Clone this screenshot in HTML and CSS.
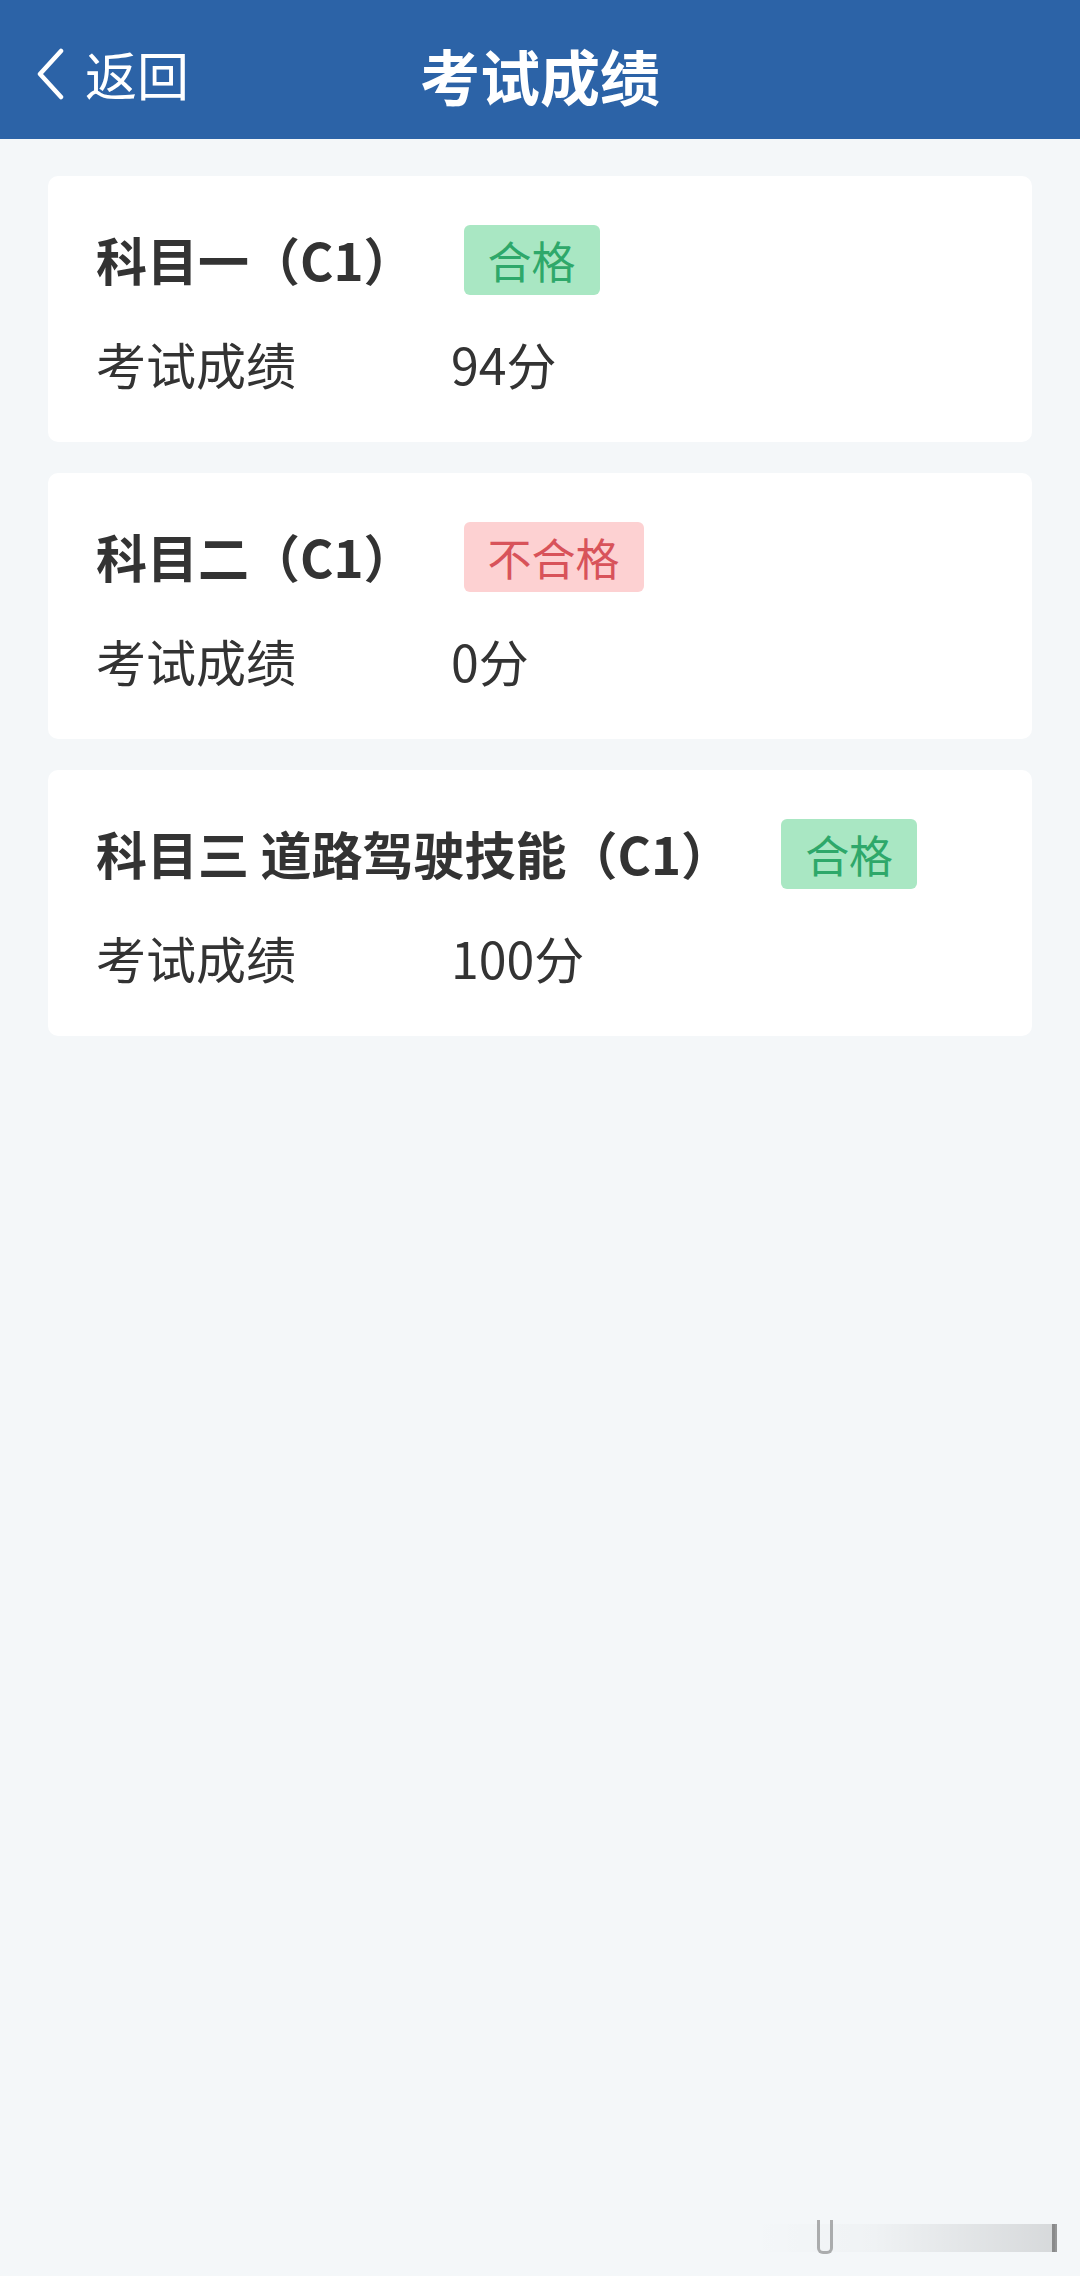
FILE: index.html
```html
<!DOCTYPE html>
<html lang="zh-CN">
<head>
<meta charset="utf-8">
<title>考试成绩</title>
<link rel="stylesheet" href="styles.css">
</head>
<body>
<header class="topbar">
  <div class="back">
    <svg class="chev" viewBox="0 0 30 52" width="30" height="52"><path d="M26 3 L5 26 L26 49" fill="none" stroke="#fff" stroke-width="4.5" stroke-linecap="round" stroke-linejoin="round"/></svg>
    <span class="back-text">返回</span>
  </div>
  <h1 class="title">考试成绩</h1>
</header>
<main class="list">
  <section class="card">
    <div class="row-title">
      <span class="subject">科目一（C1）</span>
      <span class="badge pass">合格</span>
    </div>
    <div class="row-score">
      <span class="label">考试成绩</span>
      <span class="value">94分</span>
    </div>
  </section>
  <section class="card">
    <div class="row-title">
      <span class="subject">科目二（C1）</span>
      <span class="badge fail">不合格</span>
    </div>
    <div class="row-score">
      <span class="label">考试成绩</span>
      <span class="value">0分</span>
    </div>
  </section>
  <section class="card">
    <div class="row-title">
      <span class="subject">科目三 道路驾驶技能（C1）</span>
      <span class="badge pass">合格</span>
    </div>
    <div class="row-score">
      <span class="label">考试成绩</span>
      <span class="value">100分</span>
    </div>
  </section>
</main>
<div class="mark"><span class="m1"></span><span class="m3"></span></div>
</body>
</html>
```
FILE: styles.css
```css
* { box-sizing: border-box; }
html, body { margin: 0; padding: 0; }
body {
  width: 1080px;
  height: 2276px;
  background: #f4f7f9;
  font-family: "Noto Sans CJK SC", "Noto Sans", sans-serif;
  color: #333;
  position: relative;
  overflow: hidden;
}
.topbar {
  height: 139px;
  background: #2c63a7;
  position: relative;
  display: flex;
  align-items: center;
  justify-content: center;
  padding-top: 10px;
}
.back {
  position: absolute;
  left: 35px;
  top: 46px;
  display: flex;
  align-items: center;
  gap: 20px;
  color: #fff;
}
.chev { display: block; }
.back-text {
  font-size: 52px;
  line-height: 56px;
  font-weight: 400;
}
.title {
  margin: 0;
  font-size: 60px;
  font-weight: 700;
  color: #fff;
  line-height: 1;
}
.list {
  padding: 37px 48px 0;
  display: flex;
  flex-direction: column;
  gap: 31px;
}
.card {
  background: #fff;
  border-radius: 10px;
  height: 266px;
  padding: 48px 48px 0;
}
.row-title {
  display: flex;
  align-items: center;
  height: 71px;
}
.subject {
  font-size: 51px;
  font-weight: 700;
  color: #333;
  line-height: 1;
}
.badge {
  margin-left: 49px;
  height: 70px;
  padding: 0 24px;
  border-radius: 6px;
  font-size: 44px;
  line-height: 70px;
  font-weight: 400;
}
.badge.pass { background: #a9e7c3; color: #2ea86a; }
.badge.fail { background: #fdd1d2; color: #d8535a; }
.row-score {
  display: flex;
  align-items: center;
  height: 60px;
  margin-top: 38px;
}
.label {
  width: 355px;
  font-size: 50px;
  color: #333;
  line-height: 1;
}
.value {
  font-size: 50px;
  color: #333;
  line-height: 1;
}
.mark {
  position: absolute;
  left: 750px;
  top: 2224px;
  width: 305px;
  height: 28px;
  background: linear-gradient(90deg, rgba(0,0,0,0) 0%, rgba(0,0,0,0.02) 40%, rgba(0,0,0,0.12) 100%);
}
.mark .m1 {
  position: absolute;
  left: 67px; top: -4px;
  width: 16px; height: 34px;
  border: 3px solid #666;
  border-top: none;
  border-radius: 0 0 6px 6px;
  opacity: 0.5;
}
.mark .m3 {
  position: absolute;
  right: -2px; top: 0;
  width: 5px; height: 28px;
  background: #555;
  opacity: 0.6;
}
```
